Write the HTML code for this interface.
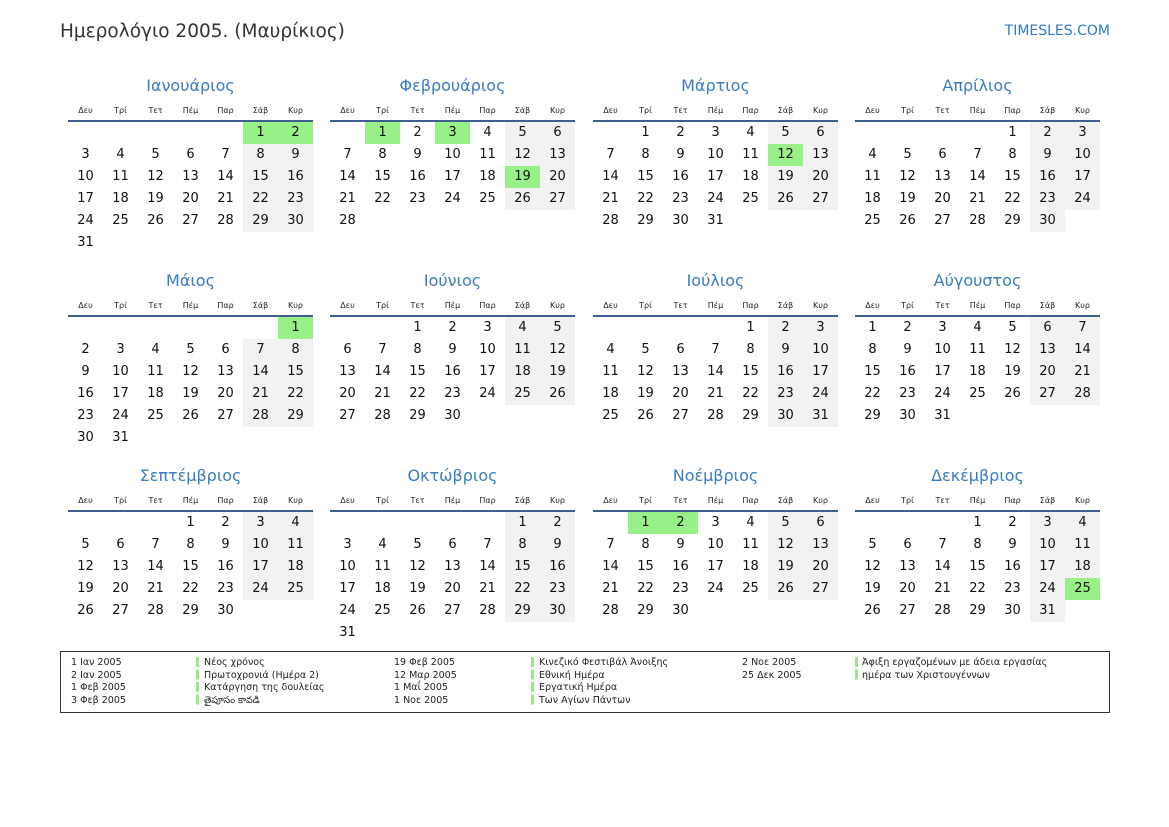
<!DOCTYPE html>
<html><head><meta charset="utf-8"><style>
body{margin:0;width:1169px;height:827px;background:#fff;font-family:"DejaVu Sans","Liberation Sans",sans-serif;color:#111;position:relative;overflow:hidden}
.hd{position:absolute;left:60px;top:21px;font-size:18.5px;color:#333}
.lg{position:absolute;right:59px;top:23px;font-size:14px;color:#2f7bc4}
.m{position:absolute;width:245px}
.t{height:27px;line-height:26px;text-align:center;font-size:16px;color:#3a7cc0}
table{border-collapse:collapse;width:245px;table-layout:fixed}
th{height:20px;font-size:8px;font-weight:normal;color:#222;border-bottom:2px solid #3f5f8f;padding:0;vertical-align:middle}
td{width:35px;height:22px;padding:0;text-align:center;font-size:13px;line-height:22px}
td.w{background:#f2f2f2}
td.h{background:#99f088}
.box{position:absolute;left:60px;top:651px;width:1048px;height:60px;border:1px solid #333;font-size:9.5px;line-height:12.5px;color:#222}
.c{position:absolute;top:5px}
.b{position:absolute;top:5px;width:3px;height:50px;background:repeating-linear-gradient(#99e888 0 10px,#fff 10px 12.5px)}
</style></head><body>
<div class="hd">Ημερολόγιο 2005. (Μαυρίκιος)</div>
<div class="lg">TIMESLES.COM</div>

<div class="m" style="left:68px;top:73px"><div class="t">Ιανουάριος</div><table><tr><th>Δευ</th><th>Τρί</th><th>Τετ</th><th>Πέμ</th><th>Παρ</th><th>Σάβ</th><th>Κυρ</th></tr>
<tr><td></td><td></td><td></td><td></td><td></td><td class="h">1</td><td class="h">2</td></tr>
<tr><td>3</td><td>4</td><td>5</td><td>6</td><td>7</td><td class="w">8</td><td class="w">9</td></tr>
<tr><td>10</td><td>11</td><td>12</td><td>13</td><td>14</td><td class="w">15</td><td class="w">16</td></tr>
<tr><td>17</td><td>18</td><td>19</td><td>20</td><td>21</td><td class="w">22</td><td class="w">23</td></tr>
<tr><td>24</td><td>25</td><td>26</td><td>27</td><td>28</td><td class="w">29</td><td class="w">30</td></tr>
<tr><td>31</td><td></td><td></td><td></td><td></td><td></td><td></td></tr></table></div>

<div class="m" style="left:330px;top:73px"><div class="t">Φεβρουάριος</div><table><tr><th>Δευ</th><th>Τρί</th><th>Τετ</th><th>Πέμ</th><th>Παρ</th><th>Σάβ</th><th>Κυρ</th></tr>
<tr><td></td><td class="h">1</td><td>2</td><td class="h">3</td><td>4</td><td class="w">5</td><td class="w">6</td></tr>
<tr><td>7</td><td>8</td><td>9</td><td>10</td><td>11</td><td class="w">12</td><td class="w">13</td></tr>
<tr><td>14</td><td>15</td><td>16</td><td>17</td><td>18</td><td class="h">19</td><td class="w">20</td></tr>
<tr><td>21</td><td>22</td><td>23</td><td>24</td><td>25</td><td class="w">26</td><td class="w">27</td></tr>
<tr><td>28</td><td></td><td></td><td></td><td></td><td></td><td></td></tr></table></div>

<div class="m" style="left:593px;top:73px"><div class="t">Μάρτιος</div><table><tr><th>Δευ</th><th>Τρί</th><th>Τετ</th><th>Πέμ</th><th>Παρ</th><th>Σάβ</th><th>Κυρ</th></tr>
<tr><td></td><td>1</td><td>2</td><td>3</td><td>4</td><td class="w">5</td><td class="w">6</td></tr>
<tr><td>7</td><td>8</td><td>9</td><td>10</td><td>11</td><td class="h">12</td><td class="w">13</td></tr>
<tr><td>14</td><td>15</td><td>16</td><td>17</td><td>18</td><td class="w">19</td><td class="w">20</td></tr>
<tr><td>21</td><td>22</td><td>23</td><td>24</td><td>25</td><td class="w">26</td><td class="w">27</td></tr>
<tr><td>28</td><td>29</td><td>30</td><td>31</td><td></td><td></td><td></td></tr></table></div>

<div class="m" style="left:855px;top:73px"><div class="t">Απρίλιος</div><table><tr><th>Δευ</th><th>Τρί</th><th>Τετ</th><th>Πέμ</th><th>Παρ</th><th>Σάβ</th><th>Κυρ</th></tr>
<tr><td></td><td></td><td></td><td></td><td>1</td><td class="w">2</td><td class="w">3</td></tr>
<tr><td>4</td><td>5</td><td>6</td><td>7</td><td>8</td><td class="w">9</td><td class="w">10</td></tr>
<tr><td>11</td><td>12</td><td>13</td><td>14</td><td>15</td><td class="w">16</td><td class="w">17</td></tr>
<tr><td>18</td><td>19</td><td>20</td><td>21</td><td>22</td><td class="w">23</td><td class="w">24</td></tr>
<tr><td>25</td><td>26</td><td>27</td><td>28</td><td>29</td><td class="w">30</td><td></td></tr></table></div>

<div class="m" style="left:68px;top:268px"><div class="t">Μάιος</div><table><tr><th>Δευ</th><th>Τρί</th><th>Τετ</th><th>Πέμ</th><th>Παρ</th><th>Σάβ</th><th>Κυρ</th></tr>
<tr><td></td><td></td><td></td><td></td><td></td><td></td><td class="h">1</td></tr>
<tr><td>2</td><td>3</td><td>4</td><td>5</td><td>6</td><td class="w">7</td><td class="w">8</td></tr>
<tr><td>9</td><td>10</td><td>11</td><td>12</td><td>13</td><td class="w">14</td><td class="w">15</td></tr>
<tr><td>16</td><td>17</td><td>18</td><td>19</td><td>20</td><td class="w">21</td><td class="w">22</td></tr>
<tr><td>23</td><td>24</td><td>25</td><td>26</td><td>27</td><td class="w">28</td><td class="w">29</td></tr>
<tr><td>30</td><td>31</td><td></td><td></td><td></td><td></td><td></td></tr></table></div>

<div class="m" style="left:330px;top:268px"><div class="t">Ιούνιος</div><table><tr><th>Δευ</th><th>Τρί</th><th>Τετ</th><th>Πέμ</th><th>Παρ</th><th>Σάβ</th><th>Κυρ</th></tr>
<tr><td></td><td></td><td>1</td><td>2</td><td>3</td><td class="w">4</td><td class="w">5</td></tr>
<tr><td>6</td><td>7</td><td>8</td><td>9</td><td>10</td><td class="w">11</td><td class="w">12</td></tr>
<tr><td>13</td><td>14</td><td>15</td><td>16</td><td>17</td><td class="w">18</td><td class="w">19</td></tr>
<tr><td>20</td><td>21</td><td>22</td><td>23</td><td>24</td><td class="w">25</td><td class="w">26</td></tr>
<tr><td>27</td><td>28</td><td>29</td><td>30</td><td></td><td></td><td></td></tr></table></div>

<div class="m" style="left:593px;top:268px"><div class="t">Ιούλιος</div><table><tr><th>Δευ</th><th>Τρί</th><th>Τετ</th><th>Πέμ</th><th>Παρ</th><th>Σάβ</th><th>Κυρ</th></tr>
<tr><td></td><td></td><td></td><td></td><td>1</td><td class="w">2</td><td class="w">3</td></tr>
<tr><td>4</td><td>5</td><td>6</td><td>7</td><td>8</td><td class="w">9</td><td class="w">10</td></tr>
<tr><td>11</td><td>12</td><td>13</td><td>14</td><td>15</td><td class="w">16</td><td class="w">17</td></tr>
<tr><td>18</td><td>19</td><td>20</td><td>21</td><td>22</td><td class="w">23</td><td class="w">24</td></tr>
<tr><td>25</td><td>26</td><td>27</td><td>28</td><td>29</td><td class="w">30</td><td class="w">31</td></tr></table></div>

<div class="m" style="left:855px;top:268px"><div class="t">Αύγουστος</div><table><tr><th>Δευ</th><th>Τρί</th><th>Τετ</th><th>Πέμ</th><th>Παρ</th><th>Σάβ</th><th>Κυρ</th></tr>
<tr><td>1</td><td>2</td><td>3</td><td>4</td><td>5</td><td class="w">6</td><td class="w">7</td></tr>
<tr><td>8</td><td>9</td><td>10</td><td>11</td><td>12</td><td class="w">13</td><td class="w">14</td></tr>
<tr><td>15</td><td>16</td><td>17</td><td>18</td><td>19</td><td class="w">20</td><td class="w">21</td></tr>
<tr><td>22</td><td>23</td><td>24</td><td>25</td><td>26</td><td class="w">27</td><td class="w">28</td></tr>
<tr><td>29</td><td>30</td><td>31</td><td></td><td></td><td></td><td></td></tr></table></div>

<div class="m" style="left:68px;top:463px"><div class="t">Σεπτέμβριος</div><table><tr><th>Δευ</th><th>Τρί</th><th>Τετ</th><th>Πέμ</th><th>Παρ</th><th>Σάβ</th><th>Κυρ</th></tr>
<tr><td></td><td></td><td></td><td>1</td><td>2</td><td class="w">3</td><td class="w">4</td></tr>
<tr><td>5</td><td>6</td><td>7</td><td>8</td><td>9</td><td class="w">10</td><td class="w">11</td></tr>
<tr><td>12</td><td>13</td><td>14</td><td>15</td><td>16</td><td class="w">17</td><td class="w">18</td></tr>
<tr><td>19</td><td>20</td><td>21</td><td>22</td><td>23</td><td class="w">24</td><td class="w">25</td></tr>
<tr><td>26</td><td>27</td><td>28</td><td>29</td><td>30</td><td></td><td></td></tr></table></div>

<div class="m" style="left:330px;top:463px"><div class="t">Οκτώβριος</div><table><tr><th>Δευ</th><th>Τρί</th><th>Τετ</th><th>Πέμ</th><th>Παρ</th><th>Σάβ</th><th>Κυρ</th></tr>
<tr><td></td><td></td><td></td><td></td><td></td><td class="w">1</td><td class="w">2</td></tr>
<tr><td>3</td><td>4</td><td>5</td><td>6</td><td>7</td><td class="w">8</td><td class="w">9</td></tr>
<tr><td>10</td><td>11</td><td>12</td><td>13</td><td>14</td><td class="w">15</td><td class="w">16</td></tr>
<tr><td>17</td><td>18</td><td>19</td><td>20</td><td>21</td><td class="w">22</td><td class="w">23</td></tr>
<tr><td>24</td><td>25</td><td>26</td><td>27</td><td>28</td><td class="w">29</td><td class="w">30</td></tr>
<tr><td>31</td><td></td><td></td><td></td><td></td><td></td><td></td></tr></table></div>

<div class="m" style="left:593px;top:463px"><div class="t">Νοέμβριος</div><table><tr><th>Δευ</th><th>Τρί</th><th>Τετ</th><th>Πέμ</th><th>Παρ</th><th>Σάβ</th><th>Κυρ</th></tr>
<tr><td></td><td class="h">1</td><td class="h">2</td><td>3</td><td>4</td><td class="w">5</td><td class="w">6</td></tr>
<tr><td>7</td><td>8</td><td>9</td><td>10</td><td>11</td><td class="w">12</td><td class="w">13</td></tr>
<tr><td>14</td><td>15</td><td>16</td><td>17</td><td>18</td><td class="w">19</td><td class="w">20</td></tr>
<tr><td>21</td><td>22</td><td>23</td><td>24</td><td>25</td><td class="w">26</td><td class="w">27</td></tr>
<tr><td>28</td><td>29</td><td>30</td><td></td><td></td><td></td><td></td></tr></table></div>

<div class="m" style="left:855px;top:463px"><div class="t">Δεκέμβριος</div><table><tr><th>Δευ</th><th>Τρί</th><th>Τετ</th><th>Πέμ</th><th>Παρ</th><th>Σάβ</th><th>Κυρ</th></tr>
<tr><td></td><td></td><td></td><td>1</td><td>2</td><td class="w">3</td><td class="w">4</td></tr>
<tr><td>5</td><td>6</td><td>7</td><td>8</td><td>9</td><td class="w">10</td><td class="w">11</td></tr>
<tr><td>12</td><td>13</td><td>14</td><td>15</td><td>16</td><td class="w">17</td><td class="w">18</td></tr>
<tr><td>19</td><td>20</td><td>21</td><td>22</td><td>23</td><td class="w">24</td><td class="h">25</td></tr>
<tr><td>26</td><td>27</td><td>28</td><td>29</td><td>30</td><td class="w">31</td><td></td></tr></table></div>

<div class="box">
<div class="c" style="left:10px">1 Ιαν 2005<br>2 Ιαν 2005<br>1 Φεβ 2005<br>3 Φεβ 2005</div>
<div class="b" style="left:135px"></div>
<div class="c" style="left:143px">Νέος χρόνος<br>Πρωτοχρονιά (Ημέρα 2)<br>Κατάργηση της δουλείας<br>తైపూసం కావడి</div>
<div class="c" style="left:333px">19 Φεβ 2005<br>12 Μαρ 2005<br>1 Μαΐ 2005<br>1 Νοε 2005</div>
<div class="b" style="left:470px"></div>
<div class="c" style="left:478px">Κινεζικό Φεστιβάλ Άνοιξης<br>Εθνική Ημέρα<br>Εργατική Ημέρα<br>Των Αγίων Πάντων</div>
<div class="c" style="left:681px">2 Νοε 2005<br>25 Δεκ 2005</div>
<div class="b" style="left:794px;height:25px"></div>
<div class="c" style="left:801px">Άφιξη εργαζομένων με άδεια εργασίας<br>ημέρα των Χριστουγέννων</div>
</div>
</body></html>
